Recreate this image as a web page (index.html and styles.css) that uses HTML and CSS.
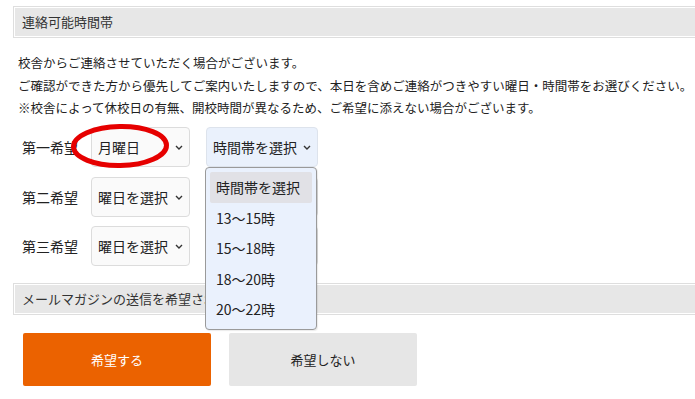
FILE: index.html
```html
<!DOCTYPE html>
<html lang="ja">
<head>
<meta charset="utf-8">
<title>連絡可能時間帯</title>
<link rel="stylesheet" href="styles.css">
</head>
<body>
<div class="page">
  <div class="sec-head"><div class="sec-inner">連絡可能時間帯</div></div>
  <div class="intro">
    <p>校舎からご連絡させていただく場合がございます。</p>
    <p>ご確認ができた方から優先してご案内いたしますので、本日を含めご連絡がつきやすい曜日・時間帯をお選びください。</p>
    <p>※校舎によって休校日の有無、開校時間が異なるため、ご希望に添えない場合がございます。</p>
  </div>
  <div class="rows">
    <div class="row">
      <span class="label">第一希望</span>
      <div class="sel day">月曜日<svg class="chev" viewBox="0 0 8 5" width="8" height="5"><path d="M1 1l3 3 3-3" fill="none" stroke="#333" stroke-width="1.4"/></svg></div>
      <div class="time-wrap">
        <div class="sel time open">時間帯を選択<svg class="chev" viewBox="0 0 8 5" width="8" height="5"><path d="M1 1l3 3 3-3" fill="none" stroke="#333" stroke-width="1.4"/></svg></div>
        <ul class="menu">
          <li class="hl">時間帯を選択</li>
          <li>13〜15時</li>
          <li>15〜18時</li>
          <li>18〜20時</li>
          <li>20〜22時</li>
        </ul>
      </div>
      <svg class="circle" width="110" height="52" viewBox="0 0 110 52"><ellipse cx="53" cy="25" rx="46.5" ry="19.5" fill="none" stroke="#e60000" stroke-width="5" transform="rotate(-1 53 25)"/></svg>
    </div>
    <div class="row">
      <span class="label">第二希望</span>
      <div class="sel day">曜日を選択<svg class="chev" viewBox="0 0 8 5" width="8" height="5"><path d="M1 1l3 3 3-3" fill="none" stroke="#333" stroke-width="1.4"/></svg></div>
      <div class="time-wrap"><div class="sel time"></div></div>
    </div>
    <div class="row">
      <span class="label">第三希望</span>
      <div class="sel day">曜日を選択<svg class="chev" viewBox="0 0 8 5" width="8" height="5"><path d="M1 1l3 3 3-3" fill="none" stroke="#333" stroke-width="1.4"/></svg></div>
      <div class="time-wrap"><div class="sel time"></div></div>
    </div>
  </div>
  <div class="sec-head mail"><div class="sec-inner">メールマガジンの送信を希望される方</div></div>
  <div class="buttons">
    <div class="btn yes">希望する</div>
    <div class="btn no">希望しない</div>
  </div>
</div>
</body>
</html>
```
FILE: styles.css
```css
* { box-sizing: border-box; }
html, body { margin: 0; padding: 0; background: #fff; overflow: hidden; }
body {
  font-family: "Noto Sans CJK JP", "Noto Sans", sans-serif;
  color: #222;
}
.page { padding: 6px 0 0 13px; width: 720px; }
.sec-head {
  border: 1px solid #dedede;
  padding: 1px;
  background: #fff;
}
.sec-inner {
  background: #e7e7e7;
  height: 28px;
  line-height: 28px;
  padding-left: 7px;
  font-size: 13px;
  color: #333;
}
.intro { margin: 14px 0 0 5px; font-size: 12.5px; line-height: 22.5px; color: #222; }
.intro p { margin: 0; white-space: nowrap; }
.rows { margin-top: 7.5px; display: flex; flex-direction: column; gap: 9.5px; }
.row { display: flex; align-items: center; position: relative; padding-left: 9px; }
.label { font-size: 14px; width: 69px; color: #222; }
.sel {
  height: 40px;
  border: 1px solid #dcdcdc;
  border-radius: 4px;
  background: #fafafa;
  font-size: 14px;
  line-height: 38px;
  padding-left: 6px;
  position: relative;
  color: #222;
}
.sel .chev { position: absolute; right: 6px; top: 17px; }
.day { width: 99px; }
.time-wrap { margin-left: 16px; position: relative; }
.time { width: 112px; }
.time.open { background: #eaf1fc; border-color: #dde3ec; }
.menu {
  position: absolute;
  left: -1px;
  top: 40px;
  width: 112px;
  margin: 0;
  padding: 4px 4px;
  list-style: none;
  background: #eaf1fd;
  border: 1px solid #9a9a9a;
  border-radius: 4px;
  z-index: 5;
  box-shadow: 1px 1px 1px rgba(0,0,0,0.08);
}
.menu li {
  height: 30.5px;
  line-height: 30.5px;
  padding-left: 6px;
  font-size: 14px;
  color: #222;
  border-radius: 2px;
}
.menu li.hl { background: #e1e1e6; }
.circle { position: absolute; left: 54px; top: -6px; z-index: 3; pointer-events: none; }
.mail { margin-top: 17px; }
.buttons { display: flex; gap: 18px; margin: 18px 0 0 10px; }
.btn {
  width: 188px;
  height: 53px;
  border-radius: 2px;
  display: flex;
  align-items: center;
  justify-content: center;
  font-size: 13px;
}
.yes { background: #eb6200; color: #fff; }
.no { background: #e6e6e6; color: #222; }
```
